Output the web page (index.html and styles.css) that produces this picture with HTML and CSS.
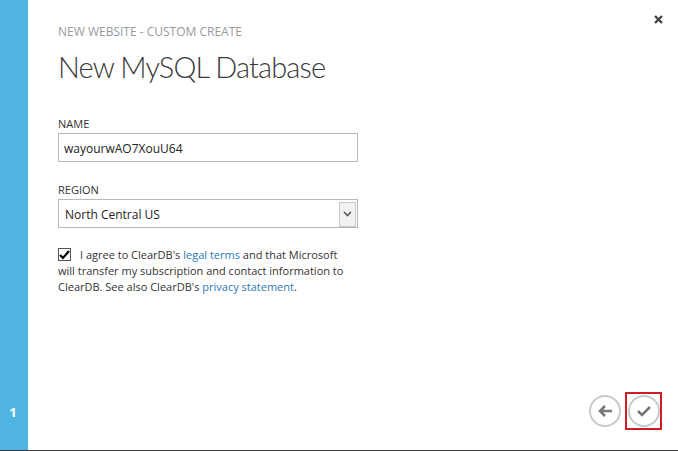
FILE: index.html
```html
<!DOCTYPE html>
<html>
<head>
<meta charset="utf-8">
<link rel="stylesheet" href="styles.css">
</head>
<body>
<div class="dialog">
  <aside class="rail">
    <span class="step">1</span>
  </aside>
  <main class="content">
    <div class="eyebrow">NEW WEBSITE - CUSTOM CREATE</div>
    <h1 class="title">New MySQL Database</h1>
    <div class="field">
      <div class="label">NAME</div>
      <div class="input">wayourwAO7XouU64</div>
    </div>
    <div class="field">
      <div class="label">REGION</div>
      <div class="select">
        <span class="select-text">North Central US</span>
        <span class="select-btn">
          <svg width="9" height="6" viewBox="0 0 9 6"><path d="M1 1 L4.5 4.5 L8 1" fill="none" stroke="#555" stroke-width="1.6"/></svg>
        </span>
      </div>
    </div>
    <div class="agree">
      <span class="checkbox">
        <svg width="11" height="10" viewBox="0 0 11 10"><path d="M1 5 L4 8 L10 1" fill="none" stroke="#000" stroke-width="2.2"/></svg>
      </span>
      <p class="agree-text">I agree to ClearDB's <a class="link">legal terms</a> and that Microsoft<br>will transfer my subscription and contact information to ClearDB. See also ClearDB's <a class="link">privacy statement</a>.</p>
    </div>
  </main>
  <div class="close">
    <svg width="9" height="9" viewBox="0 0 9 9"><path d="M1 1 L8 8 M8 1 L1 8" stroke="#444" stroke-width="2.4"/></svg>
  </div>
  <div class="nav">
    <span class="circle">
      <svg width="16" height="14" viewBox="0 0 16 14"><path d="M15 7 H3 M8 2 L3 7 L8 12" fill="none" stroke="#777" stroke-width="2.6"/></svg>
    </span>
    <span class="focus">
      <span class="circle">
        <svg width="16" height="13" viewBox="0 0 16 13"><path d="M2 6 L6 10 L14 2" fill="none" stroke="#777" stroke-width="2.6"/></svg>
      </span>
    </span>
  </div>
</div>
</body>
</html>
```
FILE: styles.css
```css
html, body {
  margin: 0;
  padding: 0;
  background: #fff;
}
body {
  font-family: "Open Sans", "Noto Sans", sans-serif;
}
.dialog {
  position: relative;
  width: 678px;
  height: 450px;
  border-bottom: 1px solid #3a3a3a;
  display: flex;
}
.rail {
  width: 28px;
  background: #4fb4e1;
  display: flex;
  align-items: flex-end;
  justify-content: center;
}
.step {
  color: #fff;
  font-weight: 700;
  font-size: 13px;
  line-height: 1;
  margin-bottom: 31px;
  margin-right: 2px;
}
.content {
  flex: 1;
  padding: 25px 0 0 30px;
}
.eyebrow {
  color: #999;
  font-size: 12px;
  line-height: 14px;
}
.title {
  margin: 10px 0 0 0;
  font-family: "Lato", "Open Sans", sans-serif;
  font-size: 29px;
  font-weight: 300;
  color: #3a3a3a;
  line-height: 36px;
  letter-spacing: -0.9px;
}
.field {
  margin-top: 32px;
}
.field + .field {
  margin-top: 21px;
}
.label {
  font-size: 11px;
  color: #333;
  line-height: 14px;
  margin-bottom: 2px;
}
.input, .select {
  box-sizing: border-box;
  width: 300px;
  height: 29px;
  border: 1px solid #b8b8b8;
  font-size: 12px;
  color: #222;
  display: flex;
  align-items: center;
  padding-left: 5px;
  padding-top: 1px;
}
.select {
  justify-content: space-between;
  padding-right: 1px;
  padding-left: 6px;
}
.select-btn {
  box-sizing: border-box;
  width: 17px;
  height: 25px;
  border: 1px solid #c8c8c8;
  background: #f2f2f2;
  display: flex;
  align-items: center;
  justify-content: center;
}
.agree {
  margin-top: 19px;
  position: relative;
}
.checkbox {
  position: absolute;
  left: 0;
  top: 1px;
  box-sizing: border-box;
  width: 13px;
  height: 13px;
  border: 1px solid #555;
  display: flex;
  align-items: center;
  justify-content: center;
}
.agree-text {
  margin: 0;
  width: 310px;
  font-size: 11px;
  line-height: 16px;
  color: #333;
  text-indent: 22px;
}
.link {
  color: #2b79b3;
}
.close {
  position: absolute;
  right: 15px;
  top: 15px;
  width: 9px;
  height: 9px;
  display: flex;
}
.nav {
  position: absolute;
  right: 16px;
  bottom: 20px;
  display: flex;
  align-items: center;
  gap: 4px;
}
.circle {
  box-sizing: border-box;
  width: 32px;
  height: 32px;
  border: 2px solid #c9c9c9;
  border-radius: 50%;
  display: flex;
  align-items: center;
  justify-content: center;
}
.focus {
  box-sizing: border-box;
  width: 37px;
  height: 38px;
  border: 2px solid #d01c24;
  display: flex;
  align-items: center;
  justify-content: center;
}
```
